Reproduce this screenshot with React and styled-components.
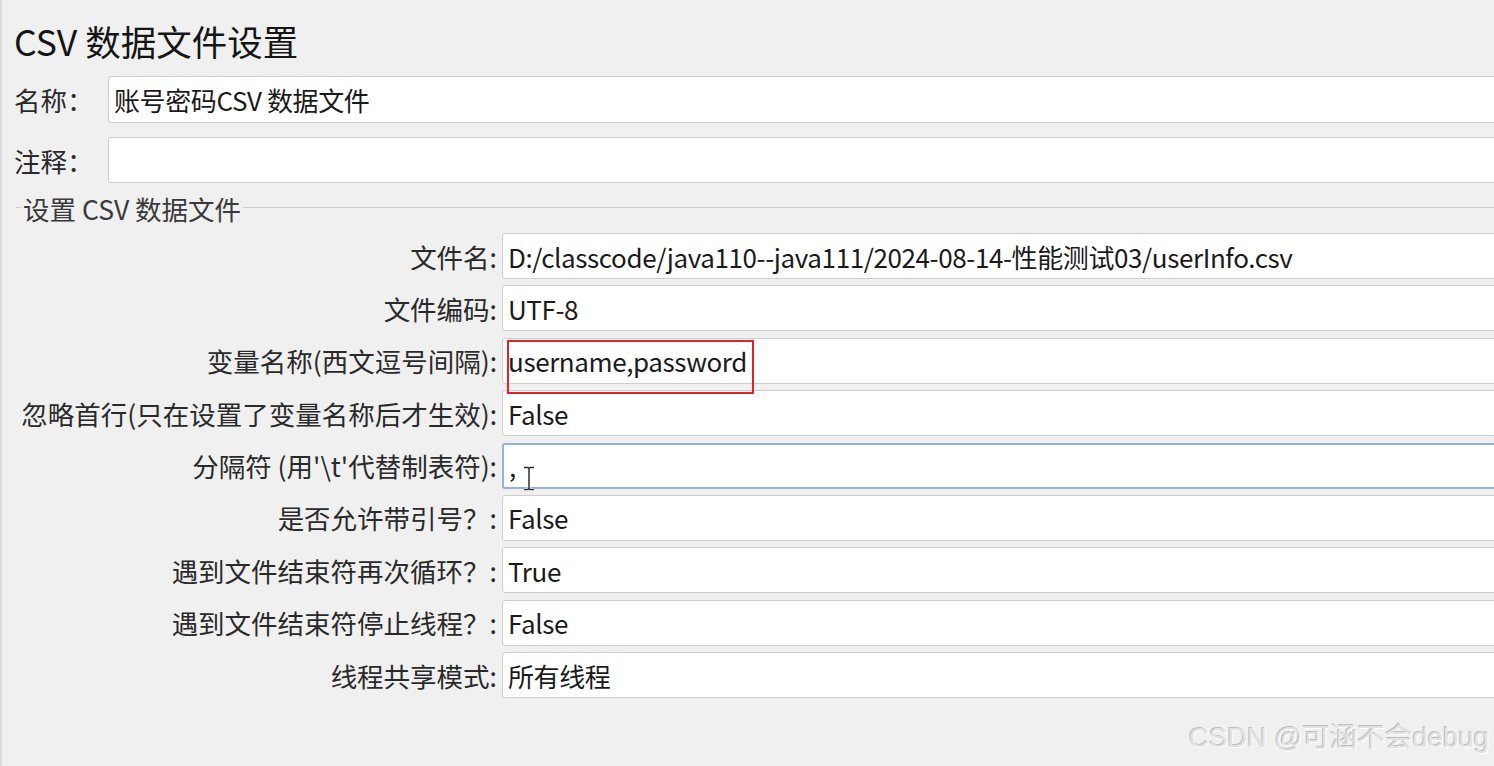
import styled, { createGlobalStyle } from 'styled-components';

const GlobalStyle = createGlobalStyle`
  html, body {
    margin: 0;
    padding: 0;
    background: #f0f0f0;
    overflow: hidden;
  }
`;

const Page = styled.div`
  position: relative;
  box-sizing: border-box;
  width: 1494px;
  height: 766px;
  padding: 10px 0 0 12px;
  background: #f0f0f0;
  border-left: 2px solid #dadada;
  overflow: hidden;
  font-family: "Noto Sans CJK SC", "Noto Sans", sans-serif;
  color: #1c1c1c;
`;

const Title = styled.h1`
  margin: 0;
  height: 60px;
  display: flex;
  align-items: center;
  font-size: 35.5px;
  font-weight: 400;
  color: #151515;
`;

const TopRow = styled.div`
  display: grid;
  grid-template-columns: 94px 1fr;
  align-items: center;
  margin: ${(p) => p.$top}px -12px 0 0;
`;

const TopLabel = styled.label`
  font-size: 26.5px;
  color: #2a2a2a;
`;

const Field = styled.div`
  position: relative;
  box-sizing: border-box;
  height: ${(p) => p.$h || 46}px;
  display: flex;
  align-items: center;
  padding-left: 5px;
  background: #fff;
  border: ${(p) => (p.$focused ? '2px solid #8fb2de' : '1px solid #cdcdcd')};
  border-radius: 3px;
  font-size: 26px;
  letter-spacing: -0.4px;
  color: #1a1a1a;
  white-space: nowrap;
`;

const Legend = styled.div`
  display: flex;
  align-items: center;
  height: 24px;
  margin: 14px 0 0 2px;
  font-size: 26.5px;
  color: #3a3a3a;
`;

const LegendLine = styled.span`
  height: 1px;
  background: #cfcfcf;
  width: ${(p) => (p.$grow ? 'auto' : '6px')};
  flex: ${(p) => (p.$grow ? 1 : 'none')};
  margin-top: -4px;
`;

const LegendText = styled.span`
  padding: 0 2px 0 1px;
  line-height: 24px;
`;

const Grid = styled.div`
  display: grid;
  grid-template-columns: 483px 1fr;
  column-gap: 5px;
  row-gap: 6.4px;
  margin: 12px -12px 0 0;
`;

const RowLabel = styled.label`
  display: flex;
  align-items: center;
  justify-content: flex-end;
  font-size: 26.5px;
  color: #2a2a2a;
  white-space: nowrap;
`;

const Mark = styled.div`
  position: absolute;
  z-index: 2;
  left: 4px;
  top: 1px;
  width: 247px;
  height: 54px;
  box-sizing: border-box;
  border: 2px solid #e3212b;
`;

const Cursor = styled.svg`
  position: absolute;
  z-index: 2;
  left: 18px;
  top: 21px;
`;

const Watermark = styled.div`
  position: absolute;
  right: 5px;
  bottom: 11px;
  font-family: "Liberation Sans", "Noto Sans CJK SC", sans-serif;
  font-size: 27.5px;
  color: #e2e2e2;
  text-shadow: -1px -1px 0 #bdbdbd, 1px 1px 0 #ffffff;
`;

const rows = [
  { label: '文件名:', value: 'D:/classcode/java110--java111/2024-08-14-性能测试03/userInfo.csv' },
  { label: '文件编码:', value: 'UTF-8' },
  { label: '变量名称(西文逗号间隔):', value: 'username,password', marked: true },
  { label: '忽略首行(只在设置了变量名称后才生效):', value: 'False' },
  { label: "分隔符 (用'\\t'代替制表符):", value: ',', focused: true },
  { label: '是否允许带引号？:', value: 'False' },
  { label: '遇到文件结束符再次循环？:', value: 'True' },
  { label: '遇到文件结束符停止线程？:', value: 'False' },
  { label: '线程共享模式:', value: '所有线程' },
];

const IBeam = () => (
  <Cursor width="14" height="25" viewBox="0 0 14 25">
    <path d="M2 1.5h4l1 1 1-1h4M7 2.5v20M2 23.5h4l1-1 1 1h4" fill="none" stroke="#fff" strokeWidth="3" />
    <path d="M2 1.5h4l1 1 1-1h4M7 2.5v20M2 23.5h4l1-1 1 1h4" fill="none" stroke="#2e2e2e" strokeWidth="1.5" />
  </Cursor>
);

export default function App() {
  return (
    <>
      <GlobalStyle />
      <Page>
        <Title>CSV 数据文件设置</Title>
        <TopRow $top={6}>
          <TopLabel>名称：</TopLabel>
          <Field $h={47}>账号密码CSV 数据文件</Field>
        </TopRow>
        <TopRow $top={14}>
          <TopLabel>注释：</TopLabel>
          <Field />
        </TopRow>
        <Legend>
          <LegendLine />
          <LegendText>设置 CSV 数据文件</LegendText>
          <LegendLine $grow />
        </Legend>
        <Grid>
          {rows.map((r) => (
            <>
              <RowLabel key={r.label + 'l'}>{r.label}</RowLabel>
              <Field key={r.label + 'f'} $focused={r.focused}>
                {r.value}
                {r.marked && <Mark />}
                {r.focused && <IBeam />}
              </Field>
            </>
          ))}
        </Grid>
        <Watermark>CSDN @可涵不会debug</Watermark>
      </Page>
    </>
  );
}
